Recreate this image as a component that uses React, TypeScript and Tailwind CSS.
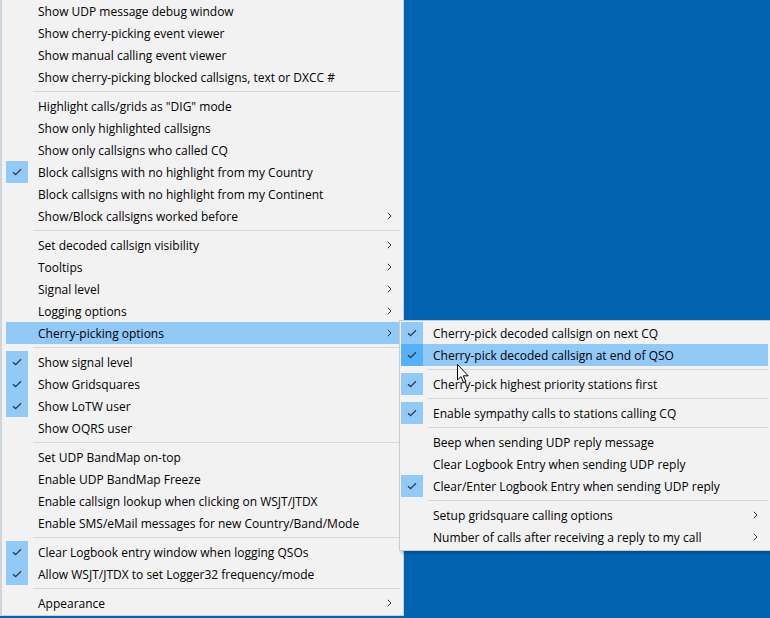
import React from "react";

type Item =
  | { sep: true }
  | { label: string; checked?: boolean; sub?: boolean; active?: boolean; sep?: false };

const mainItems: Item[] = [
  { label: "Show UDP message debug window" },
  { label: "Show cherry-picking event viewer" },
  { label: "Show manual calling event viewer" },
  { label: "Show cherry-picking blocked callsigns, text or DXCC #" },
  { sep: true },
  { label: 'Highlight calls/grids as "DIG" mode' },
  { label: "Show only highlighted callsigns" },
  { label: "Show only callsigns who called CQ" },
  { label: "Block callsigns with no highlight from my Country", checked: true },
  { label: "Block callsigns with no highlight from my Continent" },
  { label: "Show/Block callsigns worked before", sub: true },
  { sep: true },
  { label: "Set decoded callsign visibility", sub: true },
  { label: "Tooltips", sub: true },
  { label: "Signal level", sub: true },
  { label: "Logging options", sub: true },
  { label: "Cherry-picking options", sub: true, active: true },
  { sep: true },
  { label: "Show signal level", checked: true },
  { label: "Show Gridsquares", checked: true },
  { label: "Show LoTW user", checked: true },
  { label: "Show OQRS user" },
  { sep: true },
  { label: "Set UDP BandMap on-top" },
  { label: "Enable UDP BandMap Freeze" },
  { label: "Enable callsign lookup when clicking on WSJT/JTDX" },
  { label: "Enable SMS/eMail messages for new Country/Band/Mode" },
  { sep: true },
  { label: "Clear Logbook entry window when logging QSOs", checked: true },
  { label: "Allow WSJT/JTDX to set Logger32 frequency/mode", checked: true },
  { sep: true },
  { label: "Appearance", sub: true },
];

const subItems: Item[] = [
  { label: "Cherry-pick decoded callsign on next CQ", checked: true },
  { label: "Cherry-pick decoded callsign at end of QSO", checked: true, active: true },
  { sep: true },
  { label: "Cherry-pick highest priority stations first", checked: true },
  { sep: true },
  { label: "Enable sympathy calls to stations calling CQ", checked: true },
  { sep: true },
  { label: "Beep when sending UDP reply message" },
  { label: "Clear Logbook Entry when sending UDP reply" },
  { label: "Clear/Enter Logbook Entry when sending UDP reply", checked: true },
  { sep: true },
  { label: "Setup gridsquare calling options", sub: true },
  { label: "Number of calls after receiving a reply to my call", sub: true },
];

const Check = () => (
  <svg width="10" height="8" viewBox="0 0 10 8" fill="none">
    <path d="M1 4.2 L3.6 6.6 L9 1.2" stroke="#2f3a44" strokeWidth="1.3" />
  </svg>
);

const Chevron = () => (
  <svg width="5" height="8" viewBox="0 0 5 8" fill="none">
    <path d="M0.8 0.8 L4 4 L0.8 7.2" stroke="#333" strokeWidth="1" />
  </svg>
);

const Row = ({ item, arrowPad }: { item: Item; arrowPad: string }) => {
  if (item.sep) {
    return (
      <div className="h-[7px] flex items-center pl-[27px]">
        <div className="h-px w-full bg-[#d7d7d7]" />
      </div>
    );
  }
  return (
    <div className={`flex items-center h-[22px] ${item.active ? "bg-[#91c9f7]" : ""}`}>
      <div
        className={`w-[22px] h-[22px] flex items-center justify-center shrink-0 ${
          item.checked ? (item.active ? "bg-[#56b0fa]" : "bg-[#91c9f7]") : ""
        }`}
      >
        {item.checked && <Check />}
      </div>
      <span className="ml-[10px] pt-[2px] flex-1 whitespace-nowrap text-black">{item.label}</span>
      {item.sub && (
        <span className={`flex items-center ${arrowPad}`}>
          <Chevron />
        </span>
      )}
    </div>
  );
};

const Cursor = () => (
  <svg className="absolute left-[457px] top-[364px]" width="13" height="20" viewBox="0 0 13 20">
    <path
      d="M0.5 0.5 L0.5 16 L4 12.6 L6.6 18.6 L8.8 17.6 L6.3 11.8 L11.2 11.8 Z"
      fill="#fff"
      stroke="#000"
      strokeWidth="1"
    />
  </svg>
);

export default function App() {
  return (
    <div
      className="relative w-[770px] h-[618px] overflow-hidden bg-[#0063b1] text-[12px] leading-none"
      style={{ fontFamily: '"Open Sans", "Noto Sans", sans-serif' }}
    >
      <div className="w-[404px] h-[616px] bg-[#f2f2f2] border-l-2 border-[#cdd6df] border-r border-b border-r-[#d0d0d0] border-b-[#d0d0d0] pl-[4px] pr-[3px]">
        {mainItems.map((it, i) => (
          <Row key={i} item={it} arrowPad="pr-[8px]" />
        ))}
      </div>

      <div className="absolute left-[399px] top-[320px] w-[372px] bg-[#f2f2f2] border border-[#cccccc] pl-px pr-[2px] pt-px pb-[2px] shadow-[2px_2px_3px_rgba(0,0,0,0.25)]">
        {subItems.map((it, i) => (
          <Row key={i} item={it} arrowPad="pr-[10px]" />
        ))}
      </div>

      <Cursor />
    </div>
  );
}
